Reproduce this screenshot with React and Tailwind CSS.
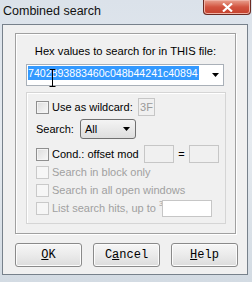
import React from 'react'

const ui = { fontFamily: '"Liberation Sans", Arial, sans-serif' }
const mono = { fontFamily: '"Liberation Mono", "Courier New", monospace' }

function Check({ disabled }) {
  return (
    <span
      className={
        'w-[13px] h-[13px] shrink-0 border ' +
        (disabled
          ? 'border-[#c9c9c9] bg-[#f6f6f6]'
          : 'border-[#8f8f8f] bg-gradient-to-br from-[#dcdcdc] to-[#f8f8f8] shadow-[inset_0_0_0_1px_#f4f4f4]')
      }
    />
  )
}

function Arrow() {
  return (
    <svg width="7" height="4" viewBox="0 0 7 4">
      <path d="M0 0h7L3.5 4z" fill="#000" />
    </svg>
  )
}

function Btn({ children }) {
  return (
    <button className="w-[67px] h-[24px] border border-[#8a8a8a] rounded-[3px] bg-gradient-to-b from-[#f6f6f6] via-[#ebebeb] to-[#dcdcdc] shadow-[inset_0_0_0_1px_#fcfcfc] text-[12px] text-black flex items-center justify-center" style={mono}>
      {children}
    </button>
  )
}

export default function App() {
  return (
    <div className="w-[252px] h-[282px] bg-gradient-to-b from-[#dbe2ea] via-[#e6ebf0] to-[#d3dbe3] flex flex-col overflow-hidden relative" style={ui}>
      <div className="h-[24px] shrink-0 relative">
        <div className="pl-[3px] pt-[3px] text-[12.5px] text-[#111] leading-[16px]">Combined search</div>
        <div className="absolute right-[1px] top-0 w-[48px] h-[15px] rounded-b-[4px] border border-t-0 border-[#6b2a22] bg-gradient-to-b from-[#e8a190] via-[#d2533f] to-[#c4402c] flex items-center justify-center shadow-[inset_0_0_0_1px_#f0b3a6]">
          <svg width="11" height="9" viewBox="0 0 11 9">
            <path d="M1 0.5l4.5 4 4.5-4M1 8.5l4.5-4 4.5 4" stroke="#fff" strokeWidth="2.2" fill="none" />
          </svg>
        </div>
      </div>

      <div className="ml-[2px] w-[246px] h-[251px] border border-[#77818b] bg-[#f0f0f0] flex flex-col">
        <div className="ml-[12px] mt-[8px] w-[221px] h-[201px] border border-[#a0a0a0] shadow-[inset_1px_1px_0_#fff,1px_1px_0_#fff] flex flex-col">
          <div className="mt-[11px] text-center text-[11.2px] leading-[13px] text-black">Hex values to search for in THIS file:</div>
          <div className="ml-[10px] mt-[6px] w-[198px] h-[22px] bg-white border border-[#a9b0b8] flex items-start relative">
            <div className="mt-[1px] ml-[1px] h-[14px] bg-[#3399ff] text-white text-[10.6px] leading-[14px] pr-[1px]">7402893883460c048b44241c40894</div>
            <div className="ml-auto mr-[4px] mt-[8px]"><Arrow /></div>
            <svg className="absolute left-[22px] top-[4px]" width="7" height="18" viewBox="0 0 7 18">
              <path d="M0.5 0.5h6M3.5 0.5v17M0.5 17.5h6" stroke="#000" strokeWidth="1" fill="none" />
            </svg>
          </div>

          <div className="ml-[10px] mt-[6px] w-[200px] h-[132px] border border-[#d5d5d5] shadow-[inset_1px_1px_0_#fff] flex flex-col pl-[9px] text-[11px] leading-[13px] whitespace-nowrap">
            <div className="mt-[5px] h-[18px] flex items-center">
              <Check />
              <span className="ml-[3px] w-[86px]">Use as wildcard:</span>
              <span className="w-[17px] h-[18px] border border-[#c6c6c6] text-[#9a9a9a] flex items-center justify-center">3F</span>
            </div>
            <div className="mt-[3px] h-[20px] flex items-center">
              <span className="w-[44px]">Search:</span>
              <div className="w-[56px] h-[20px] border border-[#707070] rounded-[3px] bg-gradient-to-b from-[#f4f4f4] to-[#dedede] flex items-center pl-[4px] pr-[5px]">
                <span>All</span>
                <span className="ml-auto"><Arrow /></span>
              </div>
            </div>
            <div className="mt-[6px] h-[18px] flex items-center">
              <Check />
              <span className="ml-[3px] w-[92px]">Cond.: offset mod</span>
              <span className="w-[30px] h-[18px] border border-[#c6c6c6]" />
              <span className="w-[15px] text-center">=</span>
              <span className="w-[30px] h-[18px] border border-[#c6c6c6]" />
            </div>
            <div className="h-[18px] flex items-center text-[#a0a0a0]">
              <Check disabled />
              <span className="ml-[3px]">Search in block only</span>
            </div>
            <div className="h-[18px] flex items-center text-[#a0a0a0]">
              <Check disabled />
              <span className="ml-[3px]">Search in all open windows</span>
            </div>
            <div className="h-[18px] flex items-center text-[#a0a0a0]">
              <Check disabled />
              <span className="ml-[3px] w-[110px] flex items-start">List search hits, up to<span className="ml-[3px] text-[7px] leading-[8px] -mt-[2px]">3</span></span>
              <span className="w-[50px] h-[17px] border border-[#c6c6c6] bg-white" />
            </div>
          </div>
        </div>

        <div className="ml-[12px] mt-[9px] flex gap-[11px]">
          <Btn><u>O</u>K</Btn>
          <Btn>C<u>a</u>ncel</Btn>
          <Btn><u>H</u>elp</Btn>
        </div>
      </div>
    </div>
  )
}
